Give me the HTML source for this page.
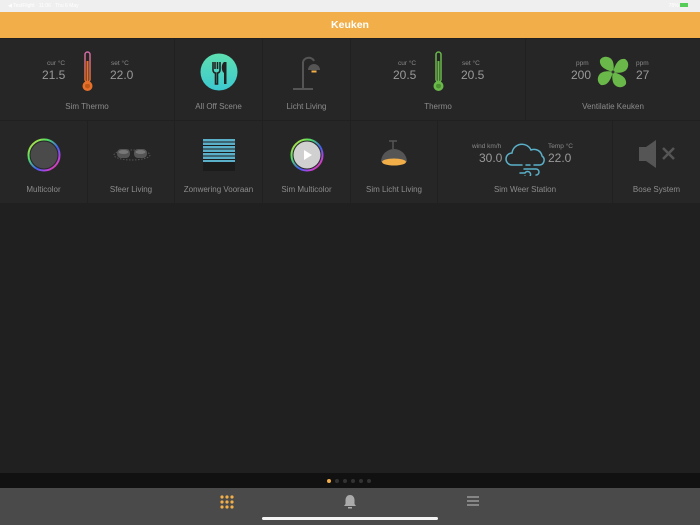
<!DOCTYPE html>
<html><head><meta charset="utf-8"><style>
*{margin:0;padding:0;box-sizing:border-box}
body{width:700px;height:525px;background:#202020;font-family:"Liberation Sans",sans-serif;position:relative;overflow:hidden;color:#8a8a8a}
.t{position:absolute;background:#262626}
.lbl{position:absolute;bottom:9px;left:0;right:0;text-align:center;font-size:8px;color:#8c8c8c}
.a{position:absolute;font-size:6.5px;color:#888}
.v{position:absolute;font-size:12px;color:#999}
svg{position:absolute}
</style></head><body>
<div style="position:absolute;left:0;top:0;width:700px;height:12px;background:#efefef;font-size:5px;color:#fff;padding:3px 8px">◀ TestFlight &nbsp;&nbsp;11:06 &nbsp;&nbsp;Thu 6 May<span style="position:absolute;right:12px;top:3px">78% <span style="display:inline-block;width:8px;height:4px;background:#5c5"></span></span></div>
<div style="position:absolute;left:0;top:12px;width:700px;height:26px;background:#f2ae48;color:#fff;font-size:10.5px;font-weight:bold;text-align:center;line-height:26px">Keuken</div>

<!-- row 1 -->
<div class="t" style="left:0;top:39px;width:174px;height:81px">
<div class="a" style="left:47px;top:21px">cur °C</div><div class="v" style="left:42px;top:29px">21.5</div>
<div class="a" style="left:111px;top:21px">set °C</div><div class="v" style="left:110px;top:29px">22.0</div>
<svg style="left:81px;top:12px" width="14" height="42"><defs><linearGradient id="g1" x1="0" y1="0" x2="0" y2="1"><stop offset="0" stop-color="#d06aa8"/><stop offset="1" stop-color="#e8702a"/></linearGradient></defs><rect x="4" y="1" width="5" height="30" rx="2.5" fill="none" stroke="url(#g1)" stroke-width="1.5"/><circle cx="6.5" cy="35" r="5" fill="#e8702a"/><circle cx="6.5" cy="35" r="2.5" fill="#c05818"/><rect x="5.5" y="10" width="2" height="23" fill="#e8702a"/></svg>
<div class="lbl">Sim Thermo</div></div>
<div class="t" style="left:175px;top:39px;width:87px;height:81px">
<svg style="left:25px;top:14px" width="38" height="38"><defs><linearGradient id="g2" x1="0" y1="0" x2="0" y2="1"><stop offset="0" stop-color="#5ee0b0"/><stop offset="1" stop-color="#3cc8d0"/></linearGradient></defs><circle cx="19" cy="19" r="18.5" fill="url(#g2)"/><path d="M13 9v8c0 2 1.5 3 2.5 3v11h2V20c1 0 2.5-1 2.5-3V9M15 9v7M17.5 9v7" stroke="#222" stroke-width="1.6" fill="none"/><path d="M24 9c-3 2-3 9 0 11v11h2.5V9z" fill="#222"/></svg>
<div class="lbl">All Off Scene</div></div>
<div class="t" style="left:263px;top:39px;width:87px;height:81px">
<svg style="left:28px;top:16px" width="34" height="36"><path d="M2 34h20M12 34V8c0-6 9-7 11-2" stroke="#555" stroke-width="2" fill="none"/><path d="M17 15a6 6 0 0 1 12 0z" fill="#555"/><rect x="20.5" y="15.5" width="5" height="2" fill="#f2ae48"/></svg>
<div class="lbl">Licht Living</div></div>
<div class="t" style="left:351px;top:39px;width:174px;height:81px">
<div class="a" style="left:47px;top:21px">cur °C</div><div class="v" style="left:42px;top:29px">20.5</div>
<div class="a" style="left:111px;top:21px">set °C</div><div class="v" style="left:110px;top:29px">20.5</div>
<svg style="left:81px;top:12px" width="14" height="42"><rect x="4" y="1" width="5" height="30" rx="2.5" fill="none" stroke="#6ab84a" stroke-width="1.5"/><circle cx="6.5" cy="35" r="5" fill="#6ab84a"/><circle cx="6.5" cy="35" r="2.5" fill="#4a9030"/><rect x="5.5" y="10" width="2" height="23" fill="#6ab84a"/></svg>
<div class="lbl">Thermo</div></div>
<div class="t" style="left:526px;top:39px;width:174px;height:81px">
<div class="a" style="left:50px;top:21px">ppm</div><div class="v" style="left:45px;top:29px">200</div>
<div class="a" style="left:110px;top:21px">ppm</div><div class="v" style="left:110px;top:29px">27</div>
<svg style="left:69px;top:15px" width="36" height="36"><g fill="#6ab84a"><path d="M18 18C11 16 4 13 5 6c3-5 11-4 13 2 1 3 1 7 0 10z"/><path d="M18 18C20 11 23 4 30 5c5 3 4 11-2 13-3 1-7 1-10 0z"/><path d="M18 18C25 20 32 23 31 30c-3 5-11 4-13-2-1-3-1-7 0-10z"/><path d="M18 18C16 25 13 32 6 31c-5-3-4-11 2-13 3-1 7-1 10 0z"/></g><circle cx="18" cy="18" r="1.5" fill="#333"/></svg>
<div class="lbl">Ventilatie Keuken</div></div>

<!-- row 2 -->
<div class="t" style="left:0;top:121px;width:87px;height:82px">
<svg style="left:27px;top:17px" width="34" height="34"><defs><linearGradient id="r1" x1="0" y1="0" x2="1" y2="1"><stop offset="0" stop-color="#e8e040"/><stop offset=".3" stop-color="#50e060"/><stop offset=".6" stop-color="#4060f0"/><stop offset=".8" stop-color="#c040e0"/><stop offset="1" stop-color="#f04050"/></linearGradient></defs><circle cx="17" cy="17" r="15.5" fill="none" stroke="url(#r1)" stroke-width="2"/><circle cx="17" cy="17" r="13.5" fill="#4a4a4a"/></svg>
<div class="lbl">Multicolor</div></div>
<div class="t" style="left:88px;top:121px;width:86px;height:82px">
<svg style="left:24px;top:25px" width="40" height="16"><ellipse cx="20" cy="9" rx="18" ry="5" fill="none" stroke="#555" stroke-dasharray="1.5 1.5"/><rect x="5" y="3" width="13" height="9" rx="4" fill="#555"/><rect x="22" y="3" width="13" height="9" rx="4" fill="#555"/><ellipse cx="11.5" cy="6" rx="5" ry="2" fill="#777"/><ellipse cx="28.5" cy="6" rx="5" ry="2" fill="#777"/></svg>
<div class="lbl">Sfeer Living</div></div>
<div class="t" style="left:175px;top:121px;width:87px;height:82px">
<svg style="left:28px;top:18px" width="32" height="32"><rect x="0" y="0" width="32" height="32" fill="#1c1c1c"/><g fill="#5ab0c8"><rect y="0" width="32" height="2.5"/><rect y="3.5" width="32" height="2.5"/><rect y="7" width="32" height="2.5"/><rect y="10.5" width="32" height="2.5"/><rect y="14" width="32" height="2.5"/><rect y="17.5" width="32" height="2.5"/><rect y="21" width="32" height="2"/></g></svg>
<div class="lbl">Zonwering Vooraan</div></div>
<div class="t" style="left:263px;top:121px;width:87px;height:82px">
<svg style="left:27px;top:17px" width="34" height="34"><circle cx="17" cy="17" r="15.5" fill="none" stroke="url(#r1)" stroke-width="2"/><circle cx="17" cy="17" r="13.5" fill="#d0d0d0"/><path d="M14 12v10l8-5z" fill="#fff"/></svg>
<div class="lbl">Sim Multicolor</div></div>
<div class="t" style="left:351px;top:121px;width:86px;height:82px">
<svg style="left:28px;top:19px" width="30" height="28"><path d="M10 1h8M14 1v8" stroke="#555" stroke-width="1.5"/><path d="M2 22a12 12 0 0 1 26 0z" fill="#555"/><ellipse cx="15" cy="22" rx="12" ry="3.5" fill="#f2ae48"/></svg>
<div class="lbl">Sim Licht Living</div></div>
<div class="t" style="left:438px;top:121px;width:174px;height:82px">
<div class="a" style="left:34px;top:22px">wind km/h</div><div class="v" style="left:41px;top:30px">30.0</div>
<div class="a" style="left:110px;top:22px">Temp °C</div><div class="v" style="left:110px;top:30px">22.0</div>
<svg style="left:66px;top:21px" width="44" height="34"><path d="M12 23H8a6 6 0 0 1 0-12 10 10 0 0 1 19-3 8 8 0 0 1 11 6 5 5 0 0 1-2 9h-6M12 23h6M22 23h4M20 27h12a3 3 0 1 1 0 6M16 31h5a3 3 0 1 1 0 3" stroke="#5ab0c8" stroke-width="1.5" fill="none" stroke-linecap="round"/></svg>
<div class="lbl">Sim Weer Station</div></div>
<div class="t" style="left:613px;top:121px;width:87px;height:82px">
<svg style="left:25px;top:18px" width="40" height="30"><path d="M1 8h7l10-7v28l-10-7H1z" fill="#555"/><path d="M25 9l11 11M36 9L25 20" stroke="#555" stroke-width="2.5"/></svg>
<div class="lbl">Bose System</div></div>

<div style="position:absolute;left:0;top:473px;width:700px;height:15px;background:#111"></div>
<div style="position:absolute;top:479px;left:327px;display:flex;gap:4px"><i style="width:4px;height:4px;border-radius:2px;background:#f2ae48"></i><i style="width:4px;height:4px;border-radius:2px;background:#333"></i><i style="width:4px;height:4px;border-radius:2px;background:#333"></i><i style="width:4px;height:4px;border-radius:2px;background:#333"></i><i style="width:4px;height:4px;border-radius:2px;background:#333"></i><i style="width:4px;height:4px;border-radius:2px;background:#333"></i></div>
<div style="position:absolute;left:0;top:488px;width:700px;height:37px;background:#4a4a4a"></div>
<svg style="left:220px;top:495px" width="14" height="14"><g fill="#f2ae48"><circle cx="2" cy="2" r="1.6"/><circle cx="7" cy="2" r="1.6"/><circle cx="12" cy="2" r="1.6"/><circle cx="2" cy="7" r="1.6"/><circle cx="7" cy="7" r="1.6"/><circle cx="12" cy="7" r="1.6"/><circle cx="2" cy="12" r="1.6"/><circle cx="7" cy="12" r="1.6"/><circle cx="12" cy="12" r="1.6"/></g></svg>
<svg style="left:343px;top:494px" width="14" height="15"><path d="M7 1c-3 0-4.5 2.5-4.5 5v4L1 12h12l-1.5-2V6C11.5 3.5 10 1 7 1z" fill="#aaa"/><rect x="5" y="13" width="4" height="1.5" fill="#aaa"/></svg>
<svg style="left:467px;top:496px" width="12" height="10"><path d="M0 1h12M0 5h12M0 9h12" stroke="#aaa" stroke-width="1.2"/></svg>
<div style="position:absolute;left:262px;top:517px;width:176px;height:3px;border-radius:2px;background:#f4f4f4"></div>
</body></html>
